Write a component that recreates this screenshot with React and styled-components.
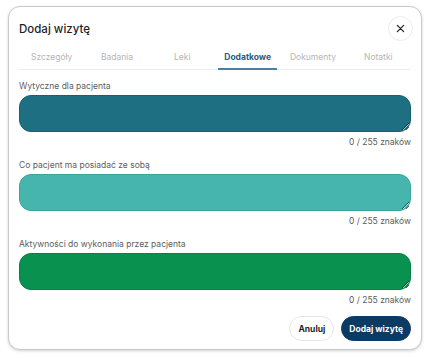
import React, { useState } from "react";
import styled, { createGlobalStyle } from "styled-components";

const Global = createGlobalStyle`
  body {
    margin: 0;
    background: #ffffff;
    font-family: Inter, "Noto Sans", sans-serif;
  }
`;

const Page = styled.div`
  padding: 6px 8px;
`;

const Card = styled.div`
  width: 414px;
  height: 344px;
  box-sizing: border-box;
  background: #fff;
  border: 1px solid #c9c9c9;
  border-radius: 12px;
  box-shadow: 0 1px 3px rgba(0, 0, 0, 0.18);
  padding: 9px 10px 9px 10px;
  display: flex;
  flex-direction: column;
`;

const Header = styled.div`
  display: flex;
  align-items: center;
  justify-content: space-between;
  height: 25px;
`;

const Title = styled.div`
  font-size: 11.5px;
  font-weight: 500;
  color: #1f1f1f;
`;

const CloseButton = styled.button`
  width: 25px;
  height: 25px;
  border-radius: 50%;
  border: 1px solid #ececec;
  background: #fff;
  display: flex;
  align-items: center;
  justify-content: center;
  padding: 0;
  margin-right: -2px;
  color: #222;
`;

const Tabs = styled.div`
  display: flex;
  margin-top: 6px;
  box-shadow: inset 0 -1px 0 #ededed;
`;

const Tab = styled.div`
  flex: 1;
  text-align: center;
  font-size: 8.5px;
  line-height: 12px;
  padding: 4px 0 5px;
  margin: 0 3px;
  color: ${({ $active }) => ($active ? "#2a5b80" : "#b5b5b5")};
  font-weight: ${({ $active }) => ($active ? 700 : 400)};
  border-bottom: 2px solid ${({ $active }) => ($active ? "#4c7fa1" : "transparent")};
`;

const Fields = styled.div`
  display: flex;
  flex-direction: column;
  gap: 11px;
  margin-top: 10px;
`;

const Field = styled.div`
  display: flex;
  flex-direction: column;
`;

const Label = styled.label`
  font-size: 8.5px;
  line-height: 12px;
  color: #5c5c5c;
  margin-bottom: 3px;
`;

const Area = styled.textarea`
  height: 37px;
  box-sizing: border-box;
  border-radius: 12px;
  border: 1px solid ${({ $border }) => $border};
  background: ${({ $bg }) => $bg};
  outline: none;
  padding: 6px 10px;
  font-family: inherit;
  font-size: 9px;
  color: #fff;
  resize: vertical;
`;

const Counter = styled.div`
  align-self: flex-end;
  font-size: 8.5px;
  line-height: 12px;
  margin-top: 4px;
  color: #5a5a5a;
`;

const Actions = styled.div`
  display: flex;
  justify-content: flex-end;
  gap: 7px;
  margin-top: 10px;
`;

const Button = styled.button`
  height: 25px;
  border-radius: 13px;
  padding: 0 ${({ $primary }) => ($primary ? "7px" : "8px")};
  font-family: inherit;
  font-size: 8.5px;
  font-weight: 700;
  border: 1px solid ${({ $primary }) => ($primary ? "#0b3a62" : "#e6e6e6")};
  background: ${({ $primary }) => ($primary ? "#0b3a62" : "#fff")};
  color: ${({ $primary }) => ($primary ? "#fff" : "#1f1f1f")};
`;

const tabs = ["Szczegóły", "Badania", "Leki", "Dodatkowe", "Dokumenty", "Notatki"];

const fields = [
  { label: "Wytyczne dla pacjenta", bg: "#1f6f83", border: "#17606f" },
  { label: "Co pacjent ma posiadać ze sobą", bg: "#46b5ae", border: "#3aa59e" },
  { label: "Aktywności do wykonania przez pacjenta", bg: "#08914f", border: "#078146" },
];

export default function App() {
  const [values, setValues] = useState(["", "", ""]);

  return (
    <Page>
      <Global />
      <Card>
        <Header>
          <Title>Dodaj wizytę</Title>
          <CloseButton aria-label="Zamknij">
            <svg width="9" height="9" viewBox="0 0 10 10">
              <path d="M1.5 1.5 L8.5 8.5 M8.5 1.5 L1.5 8.5" stroke="#222" strokeWidth="1.4" strokeLinecap="round" />
            </svg>
          </CloseButton>
        </Header>
        <Tabs>
          {tabs.map((t) => (
            <Tab key={t} $active={t === "Dodatkowe"}>
              {t}
            </Tab>
          ))}
        </Tabs>
        <Fields>
          {fields.map((f, i) => (
            <Field key={f.label}>
              <Label>{f.label}</Label>
              <Area
                $bg={f.bg}
                $border={f.border}
                maxLength={255}
                value={values[i]}
                onChange={(e) => {
                  const next = [...values];
                  next[i] = e.target.value;
                  setValues(next);
                }}
              />
              <Counter>{values[i].length} / 255 znaków</Counter>
            </Field>
          ))}
        </Fields>
        <Actions>
          <Button>Anuluj</Button>
          <Button $primary>Dodaj wizytę</Button>
        </Actions>
      </Card>
    </Page>
  );
}
